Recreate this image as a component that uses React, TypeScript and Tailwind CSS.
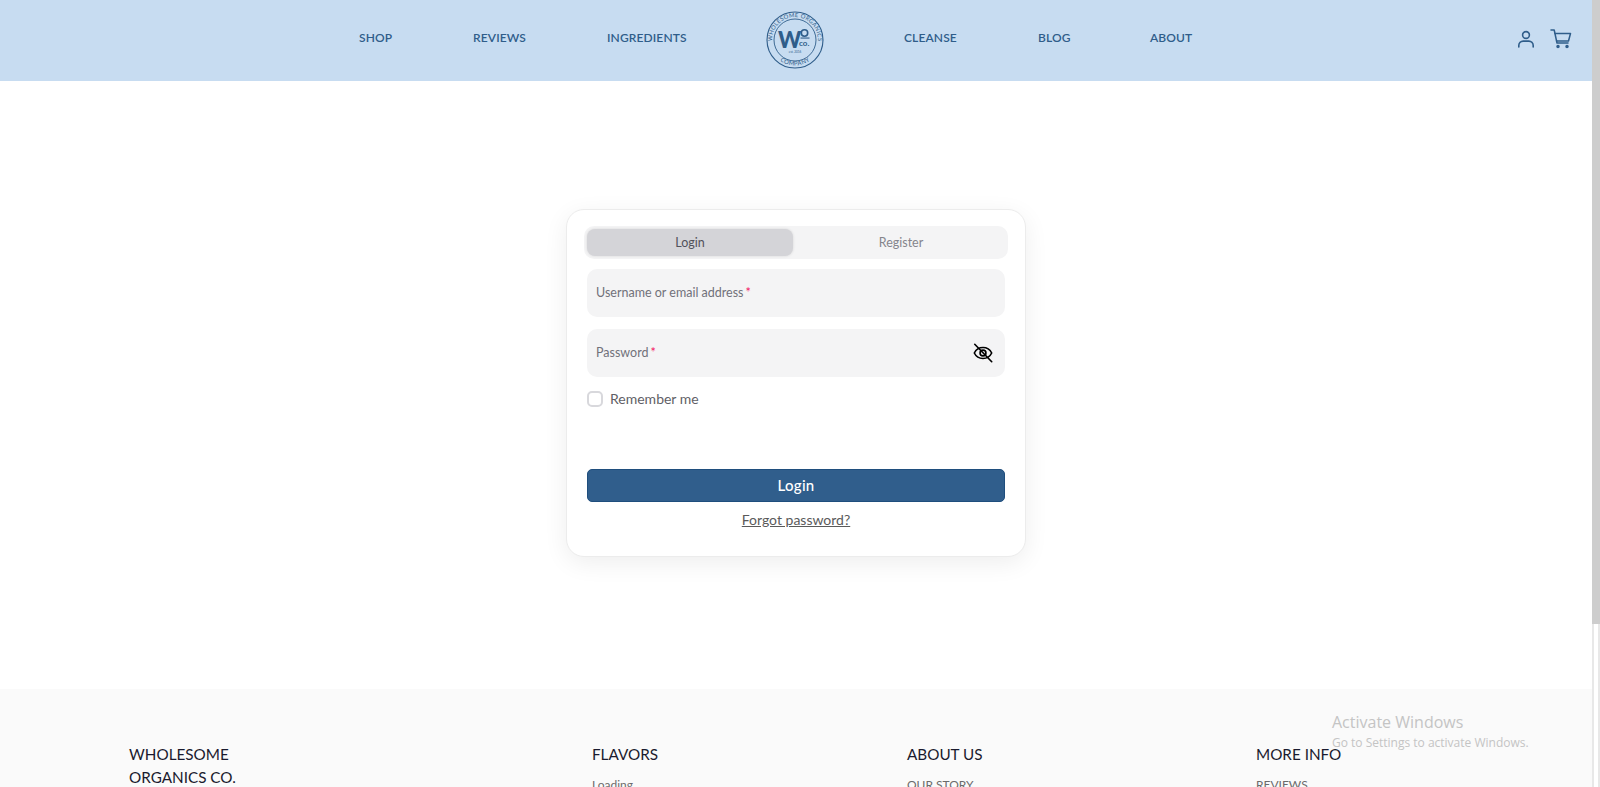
import React from 'react';

const font = "font-['Lato','Open_Sans',sans-serif]";

// Sello circular del logo
const Logo = () => (
  <svg viewBox="0 0 60 60" className="w-[60px] h-[60px]" aria-label="Wholesome Organics Company">
    <defs>
      <path id="arcTop" d="M7.900 36a22.900 22.900 0 1 1 44.200 0" />
      <path id="arcBottom" d="M4.500 30a25.500 25.500 0 0 0 51 0" />
    </defs>
    <circle cx="30" cy="30" r="28" fill="none" stroke="#2f5d8a" strokeWidth="1.100" />
    <circle cx="30" cy="30" r="21" fill="none" stroke="#2f5d8a" strokeWidth="0.900" />
    <text fontSize="5.800" fill="#2f5d8a" fontFamily="Lato, sans-serif" letterSpacing="0.3">
      <textPath href="#arcTop" startOffset="50%" textAnchor="middle">WHOLESOME ORGANICS</textPath>
    </text>
    <text fontSize="6" fill="#2f5d8a" fontFamily="Lato, sans-serif" letterSpacing="0.3">
      <textPath href="#arcBottom" startOffset="50%" textAnchor="middle">COMPANY</textPath>
    </text>
    <text x="13" y="38" fontSize="22" fontWeight="900" fill="#2f5d8a" fontFamily="Lato, sans-serif">W</text>
    <circle cx="39.500" cy="23" r="3.200" fill="none" stroke="#2f5d8a" strokeWidth="1.600" />
    <rect x="35.500" y="27.500" width="9" height="1.100" fill="#2f5d8a" />
    <text x="34" y="36" fontSize="8" fontWeight="700" fill="#2f5d8a" fontFamily="Lato, sans-serif">co.</text>
    <text x="30" y="43" fontSize="3" textAnchor="middle" fill="#2f5d8a" fontFamily="Lato, sans-serif">est. 2016</text>
  </svg>
);

const UserIcon = () => (
  <svg viewBox="0 0 20 20" className="w-5 h-5" fill="none" stroke="#2f5d8a" strokeWidth="1.600" strokeLinecap="round">
    <circle cx="10" cy="6" r="3.400" />
    <path d="M2.800 18v-1.500a4.400 4.400 0 0 1 4.400-4.400h5.600a4.400 4.400 0 0 1 4.400 4.400V18" />
  </svg>
);

const CartIcon = () => (
  <svg viewBox="0 0 22 20" className="w-[22px] h-5" fill="none" stroke="#2f5d8a" strokeWidth="1.500" strokeLinecap="round" strokeLinejoin="round">
    <path d="M1 1h3.200l2.800 13h11" />
    <path d="M5 4.500h15.500l-2 7.500H6.600" />
    <circle cx="8" cy="17.500" r="1" fill="#2f5d8a" />
    <circle cx="17" cy="17.500" r="1" fill="#2f5d8a" />
  </svg>
);

const EyeOffIcon = () => (
  <svg viewBox="0 0 24 24" className="w-[22px] h-[22px]" fill="none" stroke="#000" strokeWidth="1.800" strokeLinecap="round" strokeLinejoin="round">
    <path d="M2.500 12C4.500 8 8 6 12 6s7.500 2 9.500 6c-2 4-5.500 6-9.500 6s-7.500-2-9.500-6z" />
    <circle cx="12" cy="12" r="3.200" />
    <path d="M3 2.500l18.500 19" />
  </svg>
);

const NavLink = ({ label, className }: { label: string; className: string }) => (
  <a className={`${className} mb-[3px] text-xs font-semibold text-[#2f5d8a] tracking-[0.01em]`}>{label}</a>
);

const FooterColumn = ({ title, item, className }: { title: string; item: string; className: string }) => (
  <div className={className}>
    <h3 className="text-[15.250px] leading-[23px] text-[#1a1a2e]">{title}</h3>
    <p className="mt-[11px] text-xs leading-4 text-[#6b6b6b]">{item}</p>
  </div>
);

export default function App() {
  return (
    <div className={`${font} flex h-[787px] w-[1600px] overflow-hidden bg-white relative`}>
      <div className="flex flex-col w-[1592px] h-full">
        {/* Cabecera */}
        <header className="h-[81px] shrink-0 bg-[#c7dcf1] flex items-center pb-[2px]">
          <nav className="flex items-center pl-[359px]">
            <NavLink className="w-[114px]" label="SHOP" />
            <NavLink className="w-[134px]" label="REVIEWS" />
            <NavLink className="w-[158px]" label="INGREDIENTS" />
            <div className="w-[139px]"><Logo /></div>
            <NavLink className="w-[134px]" label="CLEANSE" />
            <NavLink className="w-[112px]" label="BLOG" />
            <NavLink className="w-[60px]" label="ABOUT" />
          </nav>
          <div className="ml-auto flex items-center gap-[14px] pr-[20px] pb-[2px]">
            <UserIcon />
            <CartIcon />
          </div>
        </header>

        {/* Formulario */}
        <main className="h-[608px] shrink-0 flex justify-center pt-[128px]">
          <div className="w-[460px] h-[348px] bg-white rounded-[18px] border border-[#ececec] shadow-[0_6px_24px_rgba(0,0,0,0.07)] px-[17px] pt-[16px] self-start">
            <div className="h-[33px] rounded-[10px] bg-[#f4f4f5] flex items-stretch p-[3px]">
              <div className="w-[206px] pt-[2px] bg-[#d4d4d8] rounded-[8px] shadow-[0_0_3px_rgba(0,0,0,0.12)] flex items-center justify-center text-[12.500px] text-[#52525b]">Login</div>
              <div className="flex-1 pl-[4px] pt-[2px] flex items-center justify-center text-[12.500px] text-[#85858c]">Register</div>
            </div>
            <div className="mx-[3px] mt-[10px] h-[48px] rounded-[10px] bg-[#f4f4f5] flex items-center px-[9px] text-[12.500px] text-[#71717a]">
              Username or email address<span className="text-[#f31260] ml-[2px]">*</span>
            </div>
            <div className="mx-[3px] mt-[12px] h-[48px] rounded-[10px] bg-[#f4f4f5] flex items-center justify-between pl-[9px] pr-[11px] text-[12.500px] text-[#71717a]">
              <span>Password<span className="text-[#f31260] ml-[2px]">*</span></span>
              <EyeOffIcon />
            </div>
            <label className="mx-[3px] mt-[12px] flex items-center gap-[7px] text-sm text-[#5f5f66]">
              <span className="w-4 h-4 rounded-[5px] border-2 border-[#d8d8dc] bg-white" />
              Remember me
            </label>
            <button className="mx-[3px] mt-[60px] block w-[418px] h-[33px] rounded-[5px] bg-[#305e8c] border border-[#1f4e7d] text-white text-[15px] font-medium tracking-[0.02em]">Login</button>
            <div className="mt-[8px] text-center text-sm text-[#5a5a5a] underline">Forgot password?</div>
          </div>
        </main>

        {/* Pie de pagina */}
        <footer className="flex-1 bg-[#fafafa] flex pl-[129px] pt-[54px] relative">
          <div className="w-[463px] text-[15.250px] leading-[23px] text-[#1a1a2e]">WHOLESOME<br />ORGANICS CO.</div>
          <FooterColumn className="w-[315px]" title="FLAVORS" item="Loading" />
          <FooterColumn className="w-[349px]" title="ABOUT US" item="OUR STORY" />
          <FooterColumn className="w-[200px]" title="MORE INFO" item="REVIEWS" />
          {/* Marca de agua de Windows */}
          <div className="absolute left-[1332px] top-[21px] font-['Open_Sans',sans-serif] text-[#c4c4c4]">
            <div className="text-[16px] leading-[24px]">Activate Windows</div>
            <div className="text-xs leading-[18px]">Go to Settings to activate Windows.</div>
          </div>
        </footer>
      </div>

      {/* Barra de desplazamiento */}
      <div className="w-2 h-full bg-[#cdcdcd] flex flex-col justify-end">
        <div className="h-[163px] bg-white border-x-2 border-[#e8e8e8]" />
      </div>
    </div>
  );
}
